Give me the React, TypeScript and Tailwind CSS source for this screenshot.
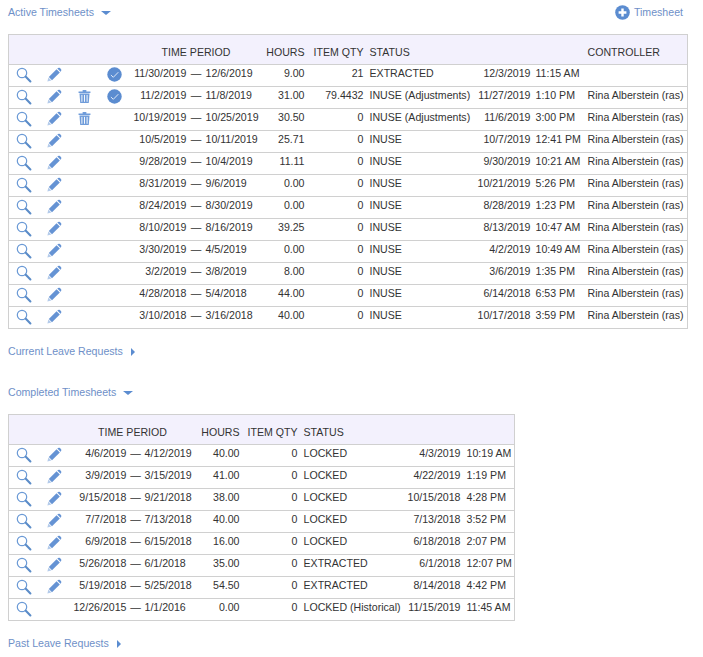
const active = [
  { from: "11/30/2019", to: "12/6/2019", hours: "9.00", qty: "21", status: "EXTRACTED", date: "12/3/2019", time: "11:15 AM", controller: "", trash: false, check: true },
  { from: "11/2/2019", to: "11/8/2019", hours: "31.00", qty: "79.4432", status: "INUSE (Adjustments)", date: "11/27/2019", time: "1:10 PM", controller: "Rina Alberstein (ras)", trash: true, check: true },
  { from: "10/19/2019", to: "10/25/2019", hours: "30.50", qty: "0", status: "INUSE (Adjustments)", date: "11/6/2019", time: "3:00 PM", controller: "Rina Alberstein (ras)", trash: true, check: false },
  { from: "10/5/2019", to: "10/11/2019", hours: "25.71", qty: "0", status: "INUSE", date: "10/7/2019", time: "12:41 PM", controller: "Rina Alberstein (ras)", trash: false, check: false },
  { from: "9/28/2019", to: "10/4/2019", hours: "11.11", qty: "0", status: "INUSE", date: "9/30/2019", time: "10:21 AM", controller: "Rina Alberstein (ras)", trash: false, check: false },
  { from: "8/31/2019", to: "9/6/2019", hours: "0.00", qty: "0", status: "INUSE", date: "10/21/2019", time: "5:26 PM", controller: "Rina Alberstein (ras)", trash: false, check: false },
  { from: "8/24/2019", to: "8/30/2019", hours: "0.00", qty: "0", status: "INUSE", date: "8/28/2019", time: "1:23 PM", controller: "Rina Alberstein (ras)", trash: false, check: false },
  { from: "8/10/2019", to: "8/16/2019", hours: "39.25", qty: "0", status: "INUSE", date: "8/13/2019", time: "10:47 AM", controller: "Rina Alberstein (ras)", trash: false, check: false },
  { from: "3/30/2019", to: "4/5/2019", hours: "0.00", qty: "0", status: "INUSE", date: "4/2/2019", time: "10:49 AM", controller: "Rina Alberstein (ras)", trash: false, check: false },
  { from: "3/2/2019", to: "3/8/2019", hours: "8.00", qty: "0", status: "INUSE", date: "3/6/2019", time: "1:35 PM", controller: "Rina Alberstein (ras)", trash: false, check: false },
  { from: "4/28/2018", to: "5/4/2018", hours: "44.00", qty: "0", status: "INUSE", date: "6/14/2018", time: "6:53 PM", controller: "Rina Alberstein (ras)", trash: false, check: false },
  { from: "3/10/2018", to: "3/16/2018", hours: "40.00", qty: "0", status: "INUSE", date: "10/17/2018", time: "3:59 PM", controller: "Rina Alberstein (ras)", trash: false, check: false },
]

const completed = [
  { from: "4/6/2019", to: "4/12/2019", hours: "40.00", qty: "0", status: "LOCKED", date: "4/3/2019", time: "10:19 AM", edit: true },
  { from: "3/9/2019", to: "3/15/2019", hours: "41.00", qty: "0", status: "LOCKED", date: "4/22/2019", time: "1:19 PM", edit: true },
  { from: "9/15/2018", to: "9/21/2018", hours: "38.00", qty: "0", status: "LOCKED", date: "10/15/2018", time: "4:28 PM", edit: true },
  { from: "7/7/2018", to: "7/13/2018", hours: "40.00", qty: "0", status: "LOCKED", date: "7/13/2018", time: "3:52 PM", edit: true },
  { from: "6/9/2018", to: "6/15/2018", hours: "16.00", qty: "0", status: "LOCKED", date: "6/18/2018", time: "2:07 PM", edit: true },
  { from: "5/26/2018", to: "6/1/2018", hours: "35.00", qty: "0", status: "EXTRACTED", date: "6/1/2018", time: "12:07 PM", edit: true },
  { from: "5/19/2018", to: "5/25/2018", hours: "54.50", qty: "0", status: "EXTRACTED", date: "8/14/2018", time: "4:42 PM", edit: true },
  { from: "12/26/2015", to: "1/1/2016", hours: "0.00", qty: "0", status: "LOCKED (Historical)", date: "11/15/2019", time: "11:45 AM", edit: false },
]

function Magnifier() {
  return (
    <svg width="16" height="16" viewBox="0 0 16 16" className="block">
      <circle cx="6" cy="6" r="4.7" fill="none" stroke="#6b9ad6" strokeWidth="1.2" />
      <path d="M9.8 9.8 L14.4 14.4" stroke="#5b8cc8" strokeWidth="2.1" strokeLinecap="round" />
    </svg>
  )
}

function Pencil() {
  return (
    <svg width="15" height="15" viewBox="0 0 15 15" className="block">
      <path d="M9.6 2.2 L12.8 5.4 L5 13.2 L1.8 10 Z" fill="#6593d4" />
      <path d="M10.6 1.2 C11.3 .5 12.2 .5 12.9 1.1 L13.9 2.1 C14.5 2.8 14.5 3.7 13.8 4.4 L13.5 4.7 L10.3 1.5 Z" fill="#6593d4" />
      <path d="M1.4 10.6 L4.4 13.6 L.4 14.6 Z" fill="#b4cbea" />
    </svg>
  )
}

function Trash() {
  return (
    <svg width="13" height="15" viewBox="0 0 14 15" className="block">
      <path d="M5 .6 H9 V2 H13.4 V3.6 H.6 V2 H5 Z" fill="#6f9cda" />
      <path d="M1.6 4.4 H12.4 L11.6 14.6 H2.4 Z" fill="#6f9cda" />
      <path d="M4.2 5.8 V13.2 M7 5.8 V13.2 M9.8 5.8 V13.2" stroke="#fff" strokeWidth="1" />
    </svg>
  )
}

function CheckCircle() {
  return (
    <svg width="15" height="15" viewBox="0 0 15 15" className="block">
      <circle cx="7.5" cy="7.5" r="7.2" fill="#5b8cd0" />
      <path d="M3.9 8 L6.3 10.3 L11.3 5.2" fill="none" stroke="#dfe9f7" strokeWidth="1" />
    </svg>
  )
}

function PlusCircle() {
  return (
    <svg width="15" height="15" viewBox="0 0 15 15" className="block">
      <circle cx="7.5" cy="7.5" r="7.3" fill="#5b8cd0" />
      <path d="M7.5 3.6 V11.4 M3.6 7.5 H11.4" stroke="#fff" strokeWidth="2.4" />
    </svg>
  )
}

function CaretDown() {
  return <span className="ml-[7px] mt-[1px] h-0 w-0 border-x-[5px] border-t-[4px] border-x-transparent border-t-[#5b8cd0]" />
}

function CaretRight() {
  return <span className="ml-[8px] mt-[1px] h-0 w-0 border-y-[4px] border-l-[4px] border-y-transparent border-l-[#5b8cd0]" />
}

function SectionLink({ label, open }: { label: string; open: boolean }) {
  return (
    <div className="flex h-[15px] items-center text-[#6e90c8]">
      <span>{label}</span>
      {open ? <CaretDown /> : <CaretRight />}
    </div>
  )
}

const th = "h-[30px] bg-[#f3f1fd] pt-[5px] font-normal whitespace-nowrap"
const td = "h-[22px] p-0 pt-[1px] align-top whitespace-nowrap"
const iconTd = "h-[22px] p-0 pt-[2px] align-top"

export default function App() {
  return (
    <div className="h-[657px] overflow-hidden bg-white pl-[8px] pr-[15px] pt-[5px] font-['Liberation_Sans',Arial,sans-serif] text-[10.6px] leading-[15px] text-[#333333]">
      <div className="flex h-[15px] items-center justify-between">
        <SectionLink label="Active Timesheets" open />
        <div className="mr-[5px] flex items-center gap-[4px] text-[#6e90c8]">
          <PlusCircle />
          <span>Timesheet</span>
        </div>
      </div>

      <table className="mt-[14px] w-[679px] table-fixed border-collapse border border-[#d0d0d0]">
        <colgroup>
          <col className="w-[31px]" />
          <col className="w-[31px]" />
          <col className="w-[29px]" />
          <col className="w-[30px]" />
          <col className="w-[57px]" />
          <col className="w-[19px]" />
          <col className="w-[53px]" />
          <col className="w-[50px]" />
          <col className="w-[59px]" />
          <col className="w-[105px]" />
          <col className="w-[60px]" />
          <col className="w-[53px]" />
          <col className="w-[102px]" />
        </colgroup>
        <thead>
          <tr className="border-b border-[#d0d0d0]">
            <th className={th} colSpan={4}></th>
            <th className={th + " text-center"} colSpan={3}>
              <span className="relative left-[2px]">TIME PERIOD</span>
            </th>
            <th className={th + " pr-[4px] text-right"}>HOURS</th>
            <th className={th + " pr-[4px] text-right"}>ITEM QTY</th>
            <th className={th + " pl-[2px] text-left"}>STATUS</th>
            <th className={th} colSpan={2}></th>
            <th className={th + " pl-[2px] text-left"}>CONTROLLER</th>
          </tr>
        </thead>
        <tbody>
          {active.map(row => (
            <tr key={row.from} className="border-b border-[#d0d0d0]">
              <td className={iconTd + " pl-[7px]"}><Magnifier /></td>
              <td className={iconTd + " pl-[7px]"}><Pencil /></td>
              <td className={iconTd + " pl-[7px]"}>{row.trash && <Trash />}</td>
              <td className={iconTd + " pl-[7px]"}>{row.check && <CheckCircle />}</td>
              <td className={td + " text-right"}>{row.from}</td>
              <td className={td + " text-center"}>—</td>
              <td className={td}>{row.to}</td>
              <td className={td + " pr-[4px] text-right"}>{row.hours}</td>
              <td className={td + " pr-[4px] text-right"}>{row.qty}</td>
              <td className={td + " pl-[2px]"}>{row.status}</td>
              <td className={td + " pr-[2px] text-right"}>{row.date}</td>
              <td className={td + " pl-[3px]"}>{row.time}</td>
              <td className={td + " pl-[2px]"}>{row.controller}</td>
            </tr>
          ))}
        </tbody>
      </table>

      <div className="mt-[15px]">
        <SectionLink label="Current Leave Requests" open={false} />
      </div>
      <div className="mt-[26px]">
        <SectionLink label="Completed Timesheets" open />
      </div>

      <table className="mt-[14px] w-[506px] table-fixed border-collapse border border-[#d0d0d0]">
        <colgroup>
          <col className="w-[31px]" />
          <col className="w-[31px]" />
          <col className="w-[56px]" />
          <col className="w-[18px]" />
          <col className="w-[48px]" />
          <col className="w-[51px]" />
          <col className="w-[58px]" />
          <col className="w-[103px]" />
          <col className="w-[59px]" />
          <col className="w-[51px]" />
        </colgroup>
        <thead>
          <tr className="border-b border-[#d0d0d0]">
            <th className={th} colSpan={2}></th>
            <th className={th + " text-center"} colSpan={3}>
              <span className="relative left-[1px]">TIME PERIOD</span>
            </th>
            <th className={th + " pr-[4px] text-right"}>HOURS</th>
            <th className={th + " pr-[4px] text-right"}>ITEM QTY</th>
            <th className={th + " pl-[2px] text-left"}>STATUS</th>
            <th className={th} colSpan={2}></th>
          </tr>
        </thead>
        <tbody>
          {completed.map(row => (
            <tr key={row.from} className="border-b border-[#d0d0d0]">
              <td className={iconTd + " pl-[7px]"}><Magnifier /></td>
              <td className={iconTd + " pl-[7px]"}>{row.edit && <Pencil />}</td>
              <td className={td + " text-right"}>{row.from}</td>
              <td className={td + " text-center"}>—</td>
              <td className={td}>{row.to}</td>
              <td className={td + " pr-[4px] text-right"}>{row.hours}</td>
              <td className={td + " pr-[4px] text-right"}>{row.qty}</td>
              <td className={td + " pl-[2px]"}>{row.status}</td>
              <td className={td + " pr-[3px] text-right"}>{row.date}</td>
              <td className={td + " pl-[3px]"}>{row.time}</td>
            </tr>
          ))}
        </tbody>
      </table>

      <div className="mt-[15px]">
        <SectionLink label="Past Leave Requests" open={false} />
      </div>
    </div>
  )
}
